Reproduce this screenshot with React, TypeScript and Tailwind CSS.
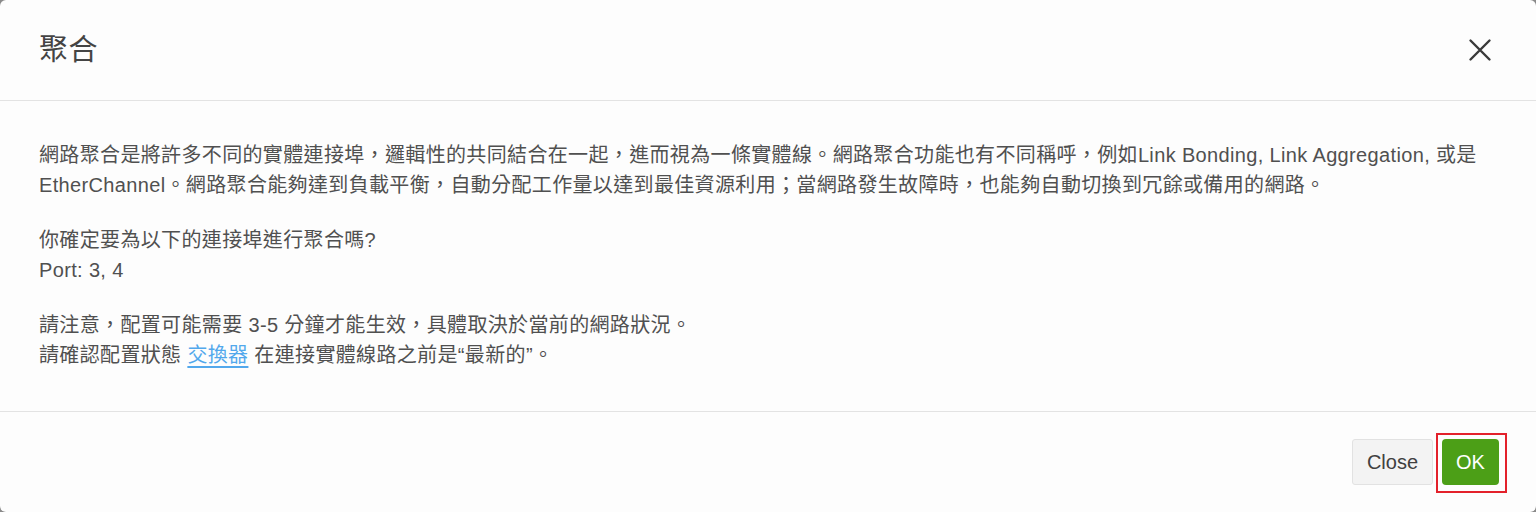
import React from "react";

export default function App() {
  const font = { fontFamily: "'Liberation Sans', 'Noto Sans CJK TC', sans-serif" };
  return (
    <div className="w-full h-[512px] bg-[#8a8a8a]" style={font}>
      <div className="w-full h-full bg-[#fdfdfd] rounded-[6px] flex flex-col overflow-hidden">
        <div className="h-[101px] flex items-center justify-between pl-[39px] pr-[44px] border-b border-[#e3e3e3] shrink-0">
          <h1 className="text-[29px] leading-none text-[#444444] font-normal tracking-[0.5px]">聚合</h1>
          <button className="w-[24px] h-[24px] flex items-center justify-center text-[#3a3a3a]" aria-label="close">
            <svg width="24" height="24" viewBox="0 0 24 24" fill="none" stroke="currentColor" strokeWidth="2.4" strokeLinecap="round">
              <path d="M2.5 2.5 L21.5 21.5 M21.5 2.5 L2.5 21.5" />
            </svg>
          </button>
        </div>
        <div className="flex-1 px-[39px] pt-[39px] text-[20px] leading-[30px] tracking-[0.35px] text-[#505050] flex flex-col gap-[25px]">
          <p>
            網路聚合是將許多不同的實體連接埠，邏輯性的共同結合在一起，進而視為一條實體線。網路聚合功能也有不同稱呼，例如Link Bonding, Link Aggregation, 或是EtherChannel。網路聚合能夠達到負載平衡，自動分配工作量以達到最佳資源利用；當網路發生故障時，也能夠自動切換到冗餘或備用的網路。
          </p>
          <p>
            你確定要為以下的連接埠進行聚合嗎?
            <br />
            Port: 3, 4
          </p>
          <p>
            請注意，配置可能需要 3-5 分鐘才能生效，具體取決於當前的網路狀況。
            <br />
            請確認配置狀態{" "}
            <a href="#" className="text-[#52a8ec] underline decoration-2 underline-offset-[4px]">交換器</a>{" "}
            在連接實體線路之前是“最新的”。
          </p>
        </div>
        <div className="h-[101px] border-t border-[#e3e3e3] flex items-start justify-end gap-[3px] pr-[29px] pt-[21px] shrink-0">
          <button className="mt-[6px] h-[46px] w-[81px] bg-[#f3f3f3] border border-[#e2e2e2] rounded-[3px] text-[20px] text-[#404040] font-normal">
            Close
          </button>
          <div className="border-2 border-[#e3212b] pt-[4px] pl-[4px] pr-[6px] pb-[6px]">
            <button className="h-[46px] w-[57px] bg-[#4c9f17] rounded-[4px] text-[20px] text-white font-normal flex items-center justify-center">
              OK
            </button>
          </div>
        </div>
      </div>
    </div>
  );
}
